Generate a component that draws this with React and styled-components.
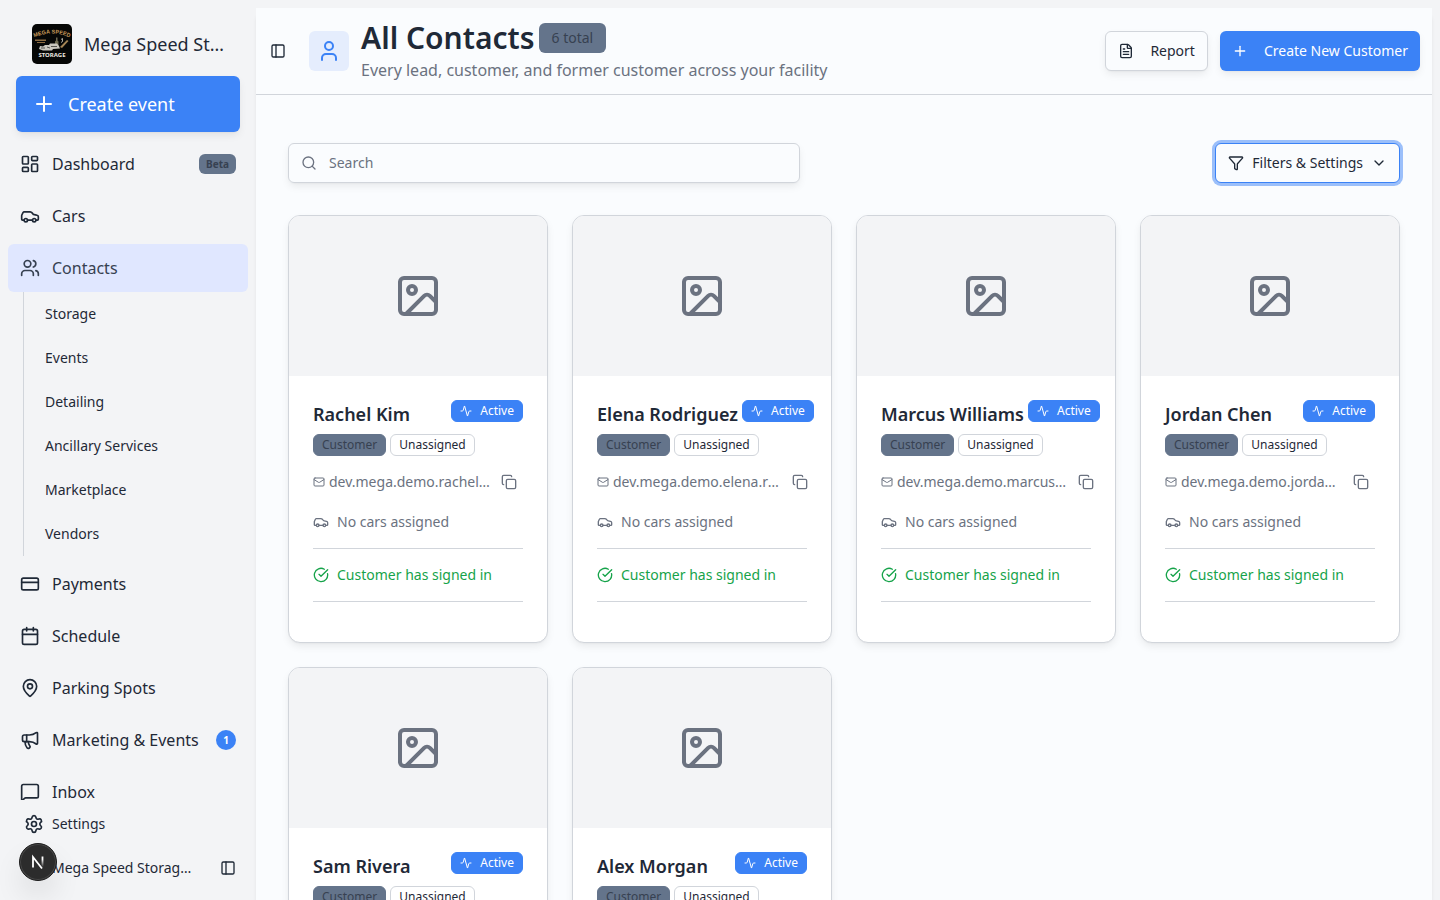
import React from 'react'
import styled, { createGlobalStyle, css } from 'styled-components'
import {
  Activity,
  Calendar,
  Car,
  ChevronDown,
  CircleCheckBig,
  Copy,
  CreditCard,
  FileText,
  Funnel,
  Image,
  LayoutDashboard,
  Mail,
  MapPin,
  Megaphone,
  MessageSquare,
  PanelLeft,
  Plus,
  Search,
  Settings,
  User,
  Users
} from 'lucide-react'

const ink = '#1f2937'
const muted = '#6b7280'
const line = '#d1d5db'
const primary = '#3b82f6'
const slate = '#64748b'
const shell = '#f3f4f6'
const surface = '#fafcfe'

const softShadow = css`
  box-shadow: 0 4px 8px -1px rgba(0, 0, 0, 0.08), 0 1px 2px -1px rgba(0, 0, 0, 0.08);
`
const ellipsis = css`
  overflow: hidden;
  text-overflow: ellipsis;
  white-space: nowrap;
`

const GlobalStyle = createGlobalStyle`
  *, *::before, *::after { box-sizing: border-box; }
  body {
    margin: 0;
    background: ${shell};
    color: ${ink};
    font-family: "Noto Sans", sans-serif;
    font-size: 14px;
    line-height: 20px;
  }
  button, input { font: inherit; color: inherit; }
  button { cursor: pointer; }
  h1, h2, p, ul { margin: 0; padding: 0; }
  ul { list-style: none; }
  a { color: inherit; text-decoration: none; }
  svg { flex-shrink: 0; }
`

const Shell = styled.div`
  display: grid;
  grid-template-columns: 256px minmax(0, 1fr);
  height: 100vh;
  overflow: hidden;
`

/* sidebar */
const Sidebar = styled.aside`
  display: flex;
  flex-direction: column;
  min-height: 0;
`
const Brand = styled.div`
  display: flex;
  align-items: center;
  gap: 12px;
  padding: 24px 32px 12px;
`
const BrandName = styled.span`
  font-size: 18px;
  line-height: 28px;
  ${ellipsis}
`
const CreateEvent = styled.button`
  display: flex;
  align-items: center;
  gap: 12px;
  flex-shrink: 0;
  height: 56px;
  margin: 0 16px 8px;
  padding: 0 16px;
  border: 0;
  border-radius: 6px;
  background: ${primary};
  color: #fff;
  font-size: 18px;
  ${softShadow}
`
const Nav = styled.nav`
  flex: 1;
  min-height: 0;
  padding: 0 8px;
  overflow: hidden;
`
const NavList = styled.ul`
  display: flex;
  flex-direction: column;
  gap: 4px;
`
const NavLink = styled.a`
  display: flex;
  align-items: center;
  gap: 12px;
  height: 48px;
  padding: 0 12px;
  border-radius: 6px;
  font-size: 16px;
  ${props => props.$active && css`
    background: #e0e7ff;
    color: #374151;
  `}
`
const NavLabel = styled.span`
  flex: 1;
  white-space: nowrap;
`
const Beta = styled.span`
  padding: 0 7px;
  border-radius: 6px;
  background: ${slate};
  color: #374151;
  font-size: 10px;
  font-weight: 700;
  line-height: 20px;
`
const Count = styled.span`
  width: 20px;
  border-radius: 10px;
  background: ${primary};
  color: #fff;
  font-size: 10px;
  font-weight: 700;
  line-height: 20px;
  text-align: center;
`
const SubList = styled.ul`
  margin-left: 15px;
  border-left: 1px solid ${line};
`
const SubLink = styled.a`
  display: flex;
  align-items: center;
  height: 44px;
  padding-left: 21px;
`
const SidebarFooter = styled.footer`
  display: flex;
  flex-direction: column;
  gap: 4px;
  padding: 4px 12px 12px;
`
const FooterLink = styled.a`
  display: flex;
  align-items: center;
  gap: 8px;
  height: 40px;
  padding: 0 12px;
`
const Account = styled.div`
  display: flex;
  align-items: center;
  justify-content: space-between;
  height: 40px;
  padding: 0 2px 0 40px;
`
const AccountName = styled.span`
  width: 144px;
  ${ellipsis}
`
const IconButton = styled.button`
  display: flex;
  align-items: center;
  justify-content: center;
  width: 28px;
  height: 28px;
  flex-shrink: 0;
  padding: 0;
  border: 0;
  border-radius: 6px;
  background: none;
`
const DevBadge = styled.button`
  position: fixed;
  left: 19px;
  bottom: 19px;
  display: flex;
  align-items: center;
  justify-content: center;
  width: 38px;
  height: 38px;
  padding: 0;
  border: 1px solid #1c1c1c;
  border-radius: 50%;
  background: #2c2c2c;
  box-shadow: inset 0 0 0 1px #484848, 0 16px 32px -8px rgba(0, 0, 0, 0.24);
`

/* page */
const Main = styled.main`
  display: flex;
  flex-direction: column;
  min-width: 0;
  min-height: 0;
  margin: 8px 8px 0 0;
  background: ${surface};
  box-shadow: 0 8px 4px -1px rgba(0, 0, 0, 0.1);
`
const PageHeader = styled.header`
  display: flex;
  align-items: center;
  padding: 12px 12px 12px 8px;
  border-bottom: 1px solid ${line};
`
const HeaderIcon = styled.div`
  display: flex;
  align-items: center;
  justify-content: center;
  width: 40px;
  height: 40px;
  flex-shrink: 0;
  margin: 0 12px 0 17px;
  border-radius: 6px;
  background: #e5edfd;
  color: ${primary};
`
const Heading = styled.div`
  flex: 1;
  min-width: 0;
`
const TitleRow = styled.div`
  display: flex;
  align-items: center;
  gap: 4px;
`
const Title = styled.h1`
  font-size: 30px;
  font-weight: 600;
  line-height: 36px;
`
const Total = styled.span`
  padding: 5px 13px;
  border-radius: 6px;
  background: ${slate};
  color: #374151;
`
const Subtitle = styled.p`
  margin-top: 2px;
  color: ${muted};
  font-size: 16px;
  line-height: 24px;
`
const Actions = styled.div`
  display: flex;
  gap: 12px;
`
const Button = styled.button`
  display: flex;
  align-items: center;
  gap: ${props => props.$tight ? '8px' : '16px'};
  height: 40px;
  padding: 0 12px;
  border: 1px solid ${line};
  border-radius: 6px;
  background: ${surface};
  white-space: nowrap;
  ${softShadow}
  ${props => props.$primary && css`
    border: 0;
    background: ${primary};
    color: #fff;
  `}
  ${props => props.$focused && css`
    border-color: ${primary};
    box-shadow: 0 0 0 3px rgba(59, 130, 246, 0.5);
  `}
`
const Content = styled.section`
  flex: 1;
  min-height: 0;
  padding: 48px 32px 0;
  overflow: hidden;
`
const Toolbar = styled.div`
  display: flex;
  justify-content: space-between;
  gap: 24px;
  margin-bottom: 32px;
`
const SearchBox = styled.label`
  display: flex;
  align-items: center;
  gap: 12px;
  flex: 0 1 512px;
  height: 40px;
  padding: 0 12px;
  border: 1px solid ${line};
  border-radius: 6px;
  color: ${muted};
  ${softShadow}
`
const SearchInput = styled.input`
  flex: 1;
  min-width: 0;
  padding: 0;
  border: 0;
  outline: 0;
  background: none;
  &::placeholder {
    color: ${muted};
    opacity: 1;
  }
`
const CardGrid = styled.div`
  display: grid;
  grid-template-columns: repeat(4, minmax(0, 1fr));
  gap: 24px;
`
const Card = styled.article`
  overflow: hidden;
  border: 1px solid ${line};
  border-radius: 12px;
  background: #fff;
  ${softShadow}
`
const Photo = styled.div`
  display: flex;
  align-items: center;
  justify-content: center;
  height: 160px;
  background: ${shell};
  color: ${muted};
`
const CardBody = styled.div`
  padding: 24px 24px 40px;
`
/* grows past the card padding when name and badge do not fit */
const Summary = styled.div`
  display: grid;
  grid-template-columns: minmax(min-content, 1fr);
`
const NameRow = styled.div`
  display: flex;
  align-items: flex-start;
  justify-content: space-between;
  gap: 4px;
`
const Name = styled.h2`
  font-size: 18px;
  font-weight: 600;
  line-height: 28px;
  white-space: nowrap;
`
const Tags = styled.div`
  display: flex;
  gap: 4px;
  margin: 6px 0 12px;
`
const Tag = styled.span`
  display: flex;
  align-items: center;
  gap: 8px;
  height: 22px;
  padding: 0 8px;
  border: 1px solid ${props => props.$color || line};
  border-radius: 6px;
  background: ${props => props.$color || '#fff'};
  color: ${props => props.$text || ink};
  font-size: 12px;
  line-height: 16px;
`
const EmailRow = styled.div`
  display: flex;
  align-items: center;
  gap: 4px;
  color: ${muted};
`
const Email = styled.a`
  flex: 1;
  width: 0;
  ${ellipsis}
`
const InfoRow = styled.div`
  display: flex;
  align-items: center;
  gap: 8px;
  padding: 16px 0;
  border-bottom: 1px solid ${line};
  color: ${props => props.$good ? '#16a34a' : muted};
`

const contacts = [
  { name: 'Rachel Kim', email: 'dev.mega.demo.rachel.kim@example.com' },
  { name: 'Elena Rodriguez', email: 'dev.mega.demo.elena.rodriguez@example.com' },
  { name: 'Marcus Williams', email: 'dev.mega.demo.marcus.williams@example.com' },
  { name: 'Jordan Chen', email: 'dev.mega.demo.jordan.chen@example.com' },
  { name: 'Sam Rivera', email: 'dev.mega.demo.sam.rivera@example.com' },
  { name: 'Alex Morgan', email: 'dev.mega.demo.alex.morgan@example.com' }
]

const navItems = [
  { label: 'Dashboard', icon: LayoutDashboard, beta: true },
  { label: 'Cars', icon: Car },
  {
    label: 'Contacts',
    icon: Users,
    active: true,
    children: ['Storage', 'Events', 'Detailing', 'Ancillary Services', 'Marketplace', 'Vendors']
  },
  { label: 'Payments', icon: CreditCard },
  { label: 'Schedule', icon: Calendar },
  { label: 'Parking Spots', icon: MapPin },
  { label: 'Marketing & Events', icon: Megaphone, count: 1 },
  { label: 'Inbox', icon: MessageSquare }
]

const Logo = () => (
  <svg width="40" height="40" viewBox="0 0 40 40" role="img" aria-label="Mega Speed Storage">
    <rect width="40" height="40" rx="5" fill="#060706" />
    <path id="logo-arc" d="M1 14Q20 5 39 14" fill="none" />
    <text fill="#c79a5b" fontSize="5.5" fontWeight="700" fontFamily="Liberation Sans Narrow, Liberation Sans, sans-serif">
      <textPath href="#logo-arc" startOffset="50%" textAnchor="middle">MEGA SPEED</textPath>
    </text>
    <path d="M3 15.500h11v1.500H3zM5 18h8v1H5z" fill="#8b6b42" />
    <path d="M28 23l7-7 1.500 1-6.500 7z" fill="#a58555" />
    <path d="M24 13.500h1.500v3l1 1v6h-3.500v-6l1-1z" fill="#6e6a52" />
    <path d="M29 15.500l1.500-1v3l-1.500 1" fill="none" stroke="#d8d3c8" strokeWidth=".8" />
    <path d="M7 25l1-3 3 .5 2-1.500h4l1-1.500h7l2 2.500 1 2.500-7 .5-1 1.500H11z" fill="#c9c6be" />
    <path d="M9 24h4M15 23l3 1M19 22.500h6" stroke="#55544f" />
    <text x="20" y="33" fill="#eeeae2" fontSize="6" fontWeight="700" fontFamily="Noto Sans, sans-serif" textAnchor="middle">STORAGE</text>
  </svg>
)

function NavItem({item}){
  const Icon = item.icon
  return(
    <li>
      <NavLink href="#" $active={item.active} aria-current={item.active ? 'page' : undefined}>
        <Icon size={20} />
        <NavLabel>{item.label}</NavLabel>
        {item.beta && <Beta>Beta</Beta>}
        {item.count && <Count>{item.count}</Count>}
      </NavLink>
      {item.children && (
        <SubList>
          {item.children.map(label => (
            <li key={label}><SubLink href="#">{label}</SubLink></li>
          ))}
        </SubList>
      )}
    </li>
  )
}

function ContactCard({name, email}){
  return(
    <Card>
      <Photo><Image size={48} /></Photo>
      <CardBody>
        <Summary>
          <NameRow>
            <Name>{name}</Name>
            <Tag $color={primary} $text="#fff"><Activity size={12} />Active</Tag>
          </NameRow>
          <Tags>
            <Tag $color={slate} $text="#374151">Customer</Tag>
            <Tag>Unassigned</Tag>
          </Tags>
          <EmailRow>
            <Mail size={12} />
            <Email href={`mailto:${email}`}>{email}</Email>
            <IconButton aria-label="Copy email"><Copy size={16} /></IconButton>
          </EmailRow>
        </Summary>
        <InfoRow><Car size={16} />No cars assigned</InfoRow>
        <InfoRow $good><CircleCheckBig size={16} />Customer has signed in</InfoRow>
      </CardBody>
    </Card>
  )
}

export default function App(){
  return(
    <Shell>
      <GlobalStyle />
      <Sidebar>
        <Brand>
          <Logo />
          <BrandName>Mega Speed Storage</BrandName>
        </Brand>
        <CreateEvent><Plus size={24} />Create event</CreateEvent>
        <Nav>
          <NavList>
            {navItems.map(item => <NavItem key={item.label} item={item} />)}
          </NavList>
        </Nav>
        <SidebarFooter>
          <FooterLink href="#"><Settings size={20} />Settings</FooterLink>
          <Account>
            <AccountName>Mega Speed Storage Team</AccountName>
            <IconButton aria-label="Collapse sidebar"><PanelLeft size={16} /></IconButton>
          </Account>
        </SidebarFooter>
      </Sidebar>
      <Main>
        <PageHeader>
          <IconButton aria-label="Toggle sidebar"><PanelLeft size={16} /></IconButton>
          <HeaderIcon><User size={24} /></HeaderIcon>
          <Heading>
            <TitleRow>
              <Title>All Contacts</Title>
              <Total>6 total</Total>
            </TitleRow>
            <Subtitle>Every lead, customer, and former customer across your facility</Subtitle>
          </Heading>
          <Actions>
            <Button><FileText size={16} />Report</Button>
            <Button $primary><Plus size={16} />Create New Customer</Button>
          </Actions>
        </PageHeader>
        <Content>
          <Toolbar>
            <SearchBox>
              <Search size={16} />
              <SearchInput type="text" placeholder="Search" aria-label="Search" />
            </SearchBox>
            <Button $tight $focused><Funnel size={16} />Filters &amp; Settings<ChevronDown size={16} /></Button>
          </Toolbar>
          <CardGrid>
            {contacts.map(contact => <ContactCard key={contact.name} {...contact} />)}
          </CardGrid>
        </Content>
      </Main>
      <DevBadge aria-label="Open developer tools">
        <svg width="16" height="16" viewBox="0 0 16 16" fill="none">
          <defs>
            <linearGradient id="n-fade" x1="0" y1="2" x2="0" y2="13" gradientUnits="userSpaceOnUse">
              <stop offset="0.3" stopColor="#fff" />
              <stop offset="1" stopColor="#fff" stopOpacity="0" />
            </linearGradient>
          </defs>
          <path d="M3 13.500V3l9 11.500" stroke="#fff" strokeWidth="1.800" />
          <path d="M12.500 2.500v10.500" stroke="url(#n-fade)" strokeWidth="1.800" />
        </svg>
      </DevBadge>
    </Shell>
  )
}
